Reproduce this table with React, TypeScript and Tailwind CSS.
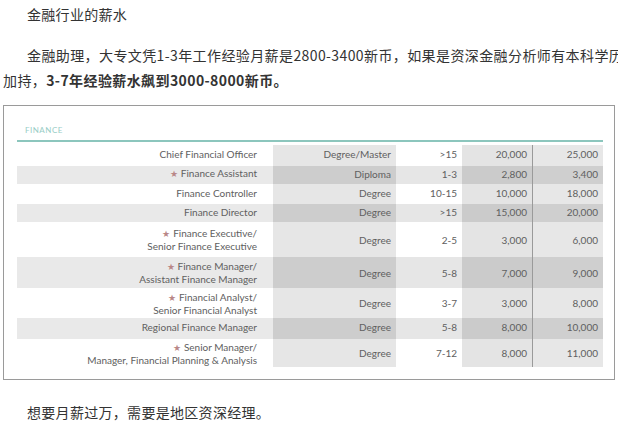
const rows = [
  { title: ["Chief Financial Officer"], star: false, degree: "Degree/Master", years: ">15", min: "20,000", max: "25,000", h: "h-[21px]" },
  { title: ["Finance Assistant"], star: true, degree: "Diploma", years: "1-3", min: "2,800", max: "3,400", h: "h-[18px]" },
  { title: ["Finance Controller"], star: false, degree: "Degree", years: "10-15", min: "10,000", max: "18,000", h: "h-[20px]" },
  { title: ["Finance Director"], star: false, degree: "Degree", years: ">15", min: "15,000", max: "20,000", h: "h-[18px]" },
  { title: ["Finance Executive/", "Senior Finance Executive"], star: true, degree: "Degree", years: "2-5", min: "3,000", max: "6,000", h: "h-[35px]" },
  { title: ["Finance Manager/", "Assistant Finance Manager"], star: true, degree: "Degree", years: "5-8", min: "7,000", max: "9,000", h: "h-[31px]" },
  { title: ["Financial Analyst/", "Senior Financial Analyst"], star: true, degree: "Degree", years: "3-7", min: "3,000", max: "8,000", h: "h-[30px]" },
  { title: ["Regional Finance Manager"], star: false, degree: "Degree", years: "5-8", min: "8,000", max: "10,000", h: "h-[21px]" },
  { title: ["Senior Manager/", "Manager, Financial Planning & Analysis"], star: true, degree: "Degree", years: "7-12", min: "8,000", max: "11,000", h: "h-[28px]" },
];

function SalaryRow({ row, even }: { row: (typeof rows)[number]; even: boolean }) {
  // single-line rows sit a little high in the original
  const lift = row.title.length === 1 ? "pb-[3px]" : "";
  const cell = `flex items-center justify-end pr-[5px] ${lift}`;
  return (
    <div className={`grid grid-cols-[256px_123px_66px_70px_71px] leading-[12px] ${row.h}`}>
      <div className={`flex flex-col items-end justify-center pr-[16px] text-right ${lift} ${even ? "bg-[#e9e9e9]" : "bg-white"}`}>
        {row.title.map((line, i) => (
          <span key={line} className="whitespace-nowrap">
            {row.star && i === 0 && <span className="mr-[3px] text-[9px] text-[#b98787]">★</span>}
            {line}
          </span>
        ))}
      </div>
      <div className={`${cell} ${even ? "bg-[#cdcdcd]" : "bg-[#e6e6e6]"}`}>{row.degree}</div>
      <div className={`${cell} ${even ? "bg-[#e6e6e6]" : "bg-white"}`}>{row.years}</div>
      <div className={`${cell} ${even ? "bg-[#cbcbcb]" : "bg-[#e4e4e4]"}`}>{row.min}</div>
      <div className={`${cell} border-l border-[#9a9a9a] ${even ? "bg-[#cfcfcf]" : "bg-[#e7e7e7]"}`}>{row.max}</div>
    </div>
  );
}

export default function App() {
  return (
    <div
      className="w-[618px] h-[434px] overflow-hidden bg-white pl-[3px] text-[14px] leading-[25px] text-[#333]"
      style={{ fontFamily: '"Noto Sans CJK SC", "Liberation Sans", sans-serif' }}
    >
      <p className="pt-[2px] pl-[24px] tracking-[0.3px]">金融行业的薪水</p>

      <div className="mt-[16px] tracking-[0.4px]">
        <p className="pl-[24px] whitespace-nowrap">
          金融助理，大专文凭1-3年工作经验月薪是2800-3400新币，如果是资深金融分析师有本科学历
        </p>
        <p className="whitespace-nowrap">
          加持，<b className="font-bold">3-7年经验薪水飙到3000-8000新币。</b>
        </p>
      </div>

      <div
        className="mt-[12px] w-[612px] border border-[#9a9a9a] pl-[13px] pr-[11px] pb-[12px] text-[10px] text-[#606060]"
        style={{ fontFamily: 'Lato, "Liberation Sans", sans-serif' }}
      >
        <div className="pt-[19px] pb-[5px] pl-[8px] border-b-2 border-[#8cc6bd]">
          <span className="block text-[8px] leading-[10px] tracking-[0.5px] text-[#97cdc6]">FINANCE</span>
        </div>
        <div className="mt-[3px]">
          {rows.map((row, i) => (
            <SalaryRow key={row.title.join()} row={row} even={i % 2 === 1} />
          ))}
        </div>
      </div>

      <p className="mt-[20px] pl-[24px] tracking-[0.3px]">想要月薪过万，需要是地区资深经理。</p>
    </div>
  );
}
